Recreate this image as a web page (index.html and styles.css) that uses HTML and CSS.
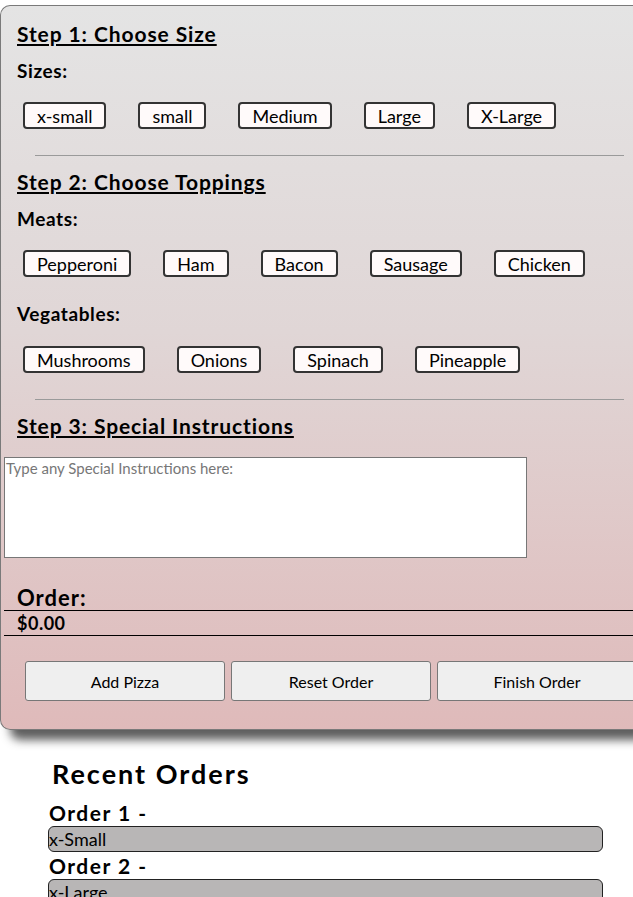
FILE: index.html
```html
<!DOCTYPE html>
<html>
<head>
<meta charset="utf-8">
<link rel="stylesheet" href="styles.css">
</head>
<body>
<div class="panel">
  <h2 class="step">Step 1: Choose Size</h2>
  <h3 class="group">Sizes:</h3>
  <div class="opts">
    <button class="opt">x-small</button>
    <button class="opt">small</button>
    <button class="opt">Medium</button>
    <button class="opt">Large</button>
    <button class="opt">X-Large</button>
  </div>
  <hr class="sep">
  <h2 class="step">Step 2: Choose Toppings</h2>
  <h3 class="group">Meats:</h3>
  <div class="opts">
    <button class="opt">Pepperoni</button>
    <button class="opt">Ham</button>
    <button class="opt">Bacon</button>
    <button class="opt">Sausage</button>
    <button class="opt">Chicken</button>
  </div>
  <h3 class="group veg">Vegatables:</h3>
  <div class="opts veg-opts">
    <button class="opt">Mushrooms</button>
    <button class="opt">Onions</button>
    <button class="opt">Spinach</button>
    <button class="opt">Pineapple</button>
  </div>
  <hr class="sep">
  <h2 class="step">Step 3: Special Instructions</h2>
  <textarea class="notes" placeholder="Type any Special Instructions here:"></textarea>
  <div class="order">
    <div class="order-title">Order:</div>
    <div class="order-total">$0.00</div>
  </div>
  <div class="actions">
    <button class="act">Add Pizza</button>
    <button class="act">Reset Order</button>
    <button class="act">Finish Order</button>
  </div>
</div>
<div class="recent">
  <h1 class="recent-title">Recent Orders</h1>
  <div class="rorder">
    <div class="rorder-title">Order 1 -</div>
    <div class="rorder-bar">x-Small</div>
  </div>
  <div class="rorder">
    <div class="rorder-title">Order 2 -</div>
    <div class="rorder-bar">x-Large</div>
  </div>
</div>
</body>
</html>
```
FILE: styles.css
```css
html, body {
  margin: 0;
  padding: 0;
  overflow: hidden;
  background: #ffffff;
}
body {
  font-family: Lato, "Open Sans", sans-serif;
  color: #000;
  width: 633px;
}
.panel {
  margin-top: 5px;
  width: 633px;
  box-sizing: border-box;
  border: 1px solid #7a7a7a;
  border-right: 0;
  border-radius: 10px 0 0 10px;
  background: linear-gradient(to bottom, #e4e4e4 0%, #e0d6d6 45%, #dfbaba 100%);
  box-shadow: 10px 10px 10px rgba(40, 40, 40, 0.75);
  padding: 16px 0 28px 0;
  overflow: hidden;
}
.step {
  margin: 14px 0 0 16px;
  font-size: 21px;
  line-height: 24px;
  font-weight: 700;
  letter-spacing: 0.9px;
  text-decoration: underline;
  text-underline-offset: 2px;
  text-decoration-thickness: 2px;
}
.panel > .step:first-child {
  margin-top: 0;
}
.group {
  margin: 14px 0 0 16px;
  font-size: 19px;
  line-height: 22px;
  font-weight: 700;
  letter-spacing: 0.6px;
}
.group.veg {
  margin-top: 26px;
}
.opts {
  display: flex;
  gap: 32px;
  margin: 20px 0 0 22px;
}
.opts.veg-opts {
  margin-top: 21px;
}
.opt {
  box-sizing: border-box;
  height: 27px;
  font-family: Lato, sans-serif;
  font-size: 18px;
  line-height: 21px;
  padding: 1px 12px 0;
  border: 2px solid #333;
  border-radius: 4px;
  background: #fffafa;
  color: #000;
}
.sep {
  margin: 26px 0 0 34px;
  width: 589px;
  border: 0;
  border-top: 1px solid #9a9a9a;
  height: 0;
}
.notes {
  display: block;
  margin: 19px 0 0 3px;
  width: 523px;
  height: 101px;
  box-sizing: border-box;
  border: 1px solid #777;
  padding: 1px 1px;
  font-family: Lato, sans-serif;
  font-size: 15px;
  resize: none;
  background: #fff;
}
.notes::placeholder {
  color: #777;
}
.order {
  margin: 28px 0 0 3px;
}
.order-title {
  padding-left: 13px;
  font-size: 22px;
  line-height: 24px;
  font-weight: 700;
  letter-spacing: 1px;
  border-bottom: 1px solid #000;
}
.order-total {
  padding-left: 13px;
  font-size: 18px;
  line-height: 24px;
  font-weight: 700;
  letter-spacing: 0.5px;
  border-bottom: 1px solid #000;
}
.actions {
  display: flex;
  gap: 6px;
  margin: 25px 0 0 24px;
}
.act {
  flex: none;
  width: 200px;
  height: 40px;
  font-family: Lato, sans-serif;
  font-size: 16px;
  background: #efefef;
  border: 1px solid #777;
  border-radius: 3px;
  color: #000;
}
.recent {
  margin: 27px 0 0 48px;
  width: 555px;
}
.recent-title {
  margin: 0 0 0 4px;
  font-size: 27px;
  line-height: 34px;
  font-weight: 700;
  letter-spacing: 2px;
}
.rorder-title {
  margin-top: 10px;
  font-size: 21px;
  line-height: 24px;
  font-weight: 700;
  letter-spacing: 1.5px;
  padding-left: 1px;
}
.rorder + .rorder .rorder-title {
  margin-top: 2px;
}
.rorder-bar {
  margin-top: 1px;
  background: #b8b6b6;
  border: 1px solid #222;
  border-radius: 6px;
  font-size: 18px;
  line-height: 24px;
  height: 24px;
}
```
